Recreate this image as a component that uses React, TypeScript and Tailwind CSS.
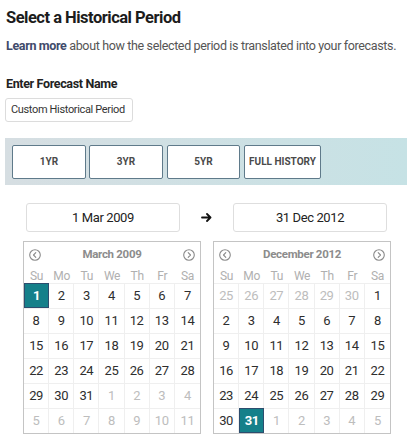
import React from "react";

type Cell = { d: number; cur: boolean; sel?: boolean };

function buildMonth(prevDays: number[], count: number, selected: number): Cell[][] {
  const cells: Cell[] = [];
  prevDays.forEach((d) => cells.push({ d, cur: false }));
  for (let i = 1; i <= count; i++) cells.push({ d: i, cur: true, sel: i === selected });
  let n = 1;
  while (cells.length < 42) cells.push({ d: n++, cur: false });
  const rows: Cell[][] = [];
  for (let r = 0; r < 6; r++) rows.push(cells.slice(r * 7, r * 7 + 7));
  return rows;
}

const DOW = ["Su", "Mo", "Tu", "We", "Th", "Fr", "Sa"];

function NavIcon({ dir }: { dir: "l" | "r" }) {
  return (
    <svg width="12" height="12" viewBox="0 0 12 12" fill="none" stroke="#8a8a8a" strokeWidth="1.1">
      <circle cx="6" cy="6" r="5.3" />
      {dir === "l" ? (
        <path d="M6.8 3.6 4.5 6l2.3 2.4" strokeLinecap="round" strokeLinejoin="round" />
      ) : (
        <path d="M5.2 3.6 7.5 6 5.2 8.4" strokeLinecap="round" strokeLinejoin="round" />
      )}
    </svg>
  );
}

function Calendar({ title, rows }: { title: string; rows: Cell[][] }) {
  return (
    <div className="w-[178px] border border-[#c4c4c4] bg-white">
      <div className="h-[25px] flex items-center justify-between px-[5px]">
        <NavIcon dir="l" />
        <span className="text-[11.5px] font-bold text-[#8c8c8c] tracking-[-0.3px]">{title}</span>
        <NavIcon dir="r" />
      </div>
      <div className="grid grid-cols-7 h-[16px]">
        {DOW.map((d) => (
          <div key={d} className="flex items-center justify-center text-[12px] tracking-[-0.3px] text-[#b0b0b0]">
            {d}
          </div>
        ))}
      </div>
      {rows.map((row, ri) => (
        <div key={ri} className="grid grid-cols-7 h-[25px]">
          {row.map((c, ci) => (
            <div
              key={ci}
              className={
                c.sel
                  ? "flex items-center justify-center text-[13px] tracking-[-0.4px] font-bold text-white bg-[#15808a] border-[1.5px] border-[#2d4d6e]"
                  : `flex items-center justify-center text-[13px] tracking-[-0.4px] border-t border-[#efefef] ${
                      ci < 6 ? "border-r" : ""
                    } ${c.cur ? "text-[#2e2e2e]" : "text-[#bdbdbd]"}`
              }
            >
              {c.d}
            </div>
          ))}
        </div>
      ))}
    </div>
  );
}

export default function App() {
  const mar = buildMonth([], 31, 1);
  const dec = buildMonth([25, 26, 27, 28, 29, 30], 31, 31);
  return (
    <div
      className="w-[407px] h-[442px] overflow-hidden bg-white text-[#333]"
      style={{ fontFamily: "Roboto, 'Liberation Sans', sans-serif" }}
    >
      <h1 className="mt-[6px] ml-[6px] text-[16.5px] leading-[24px] font-bold tracking-[-0.5px] text-[#1c1c1c] whitespace-nowrap">
        Select a Historical Period
      </h1>
      <p className="mt-[7px] ml-[6px] text-[12.5px] leading-[18px] tracking-[-0.35px] text-[#555] whitespace-nowrap">
        <span className="font-bold text-[#3f4b6b]">Learn more</span> about how the selected period is translated into your forecasts.
      </p>
      <div className="mt-[20px] ml-[6px] text-[12.5px] leading-[18px] tracking-[-0.35px] font-bold text-[#222]">
        Enter Forecast Name
      </div>
      <div className="mt-[5px] ml-[5px] w-[128px] h-[24px] border border-[#dcdcdc] rounded-[3px] flex items-center pl-[5px] text-[11px] tracking-[-0.35px] text-[#333] whitespace-nowrap">
        Custom Historical Period
      </div>
      <div className="mt-[16px] ml-[5px] h-[47px] bg-gradient-to-r from-[#d6dee2] to-[#c6e2e5] flex items-center pl-[7px]">
        {[
          ["1YR", "w-[74px]", ""],
          ["3YR", "w-[74px]", "ml-[3px]"],
          ["5YR", "w-[73px]", "ml-[4px]"],
          ["FULL HISTORY", "w-[77px]", "ml-[4px]"],
        ].map(([t, w, m]) => (
          <div
            key={t}
            className={`${w} ${m} h-[34px] bg-white border border-[#5f7a8a] rounded-[2px] flex items-center justify-center text-[10px] font-bold text-[#4a4a4a] whitespace-nowrap`}
          >
            {t}
          </div>
        ))}
      </div>
      <div className="mt-[18px] flex items-center pl-[26px]">
        <div className="w-[154px] h-[29px] border border-[#dedede] rounded-[3px] flex items-center justify-center text-[13px] tracking-[-0.4px] text-[#222]">
          1 Mar 2009
        </div>
        <div className="w-[53px] flex justify-center">
          <svg width="11" height="9" viewBox="0 0 11 9" fill="none" stroke="#111" strokeWidth="1.8" strokeLinecap="round" strokeLinejoin="round">
            <path d="M1 4.5h8.5M6 1l3.5 3.5L6 8" />
          </svg>
        </div>
        <div className="w-[154px] h-[29px] border border-[#dedede] rounded-[3px] flex items-center justify-center text-[13px] tracking-[-0.4px] text-[#222]">
          31 Dec 2012
        </div>
      </div>
      <div className="mt-[9px] flex pl-[23px] gap-[12px]">
        <Calendar title="March 2009" rows={mar} />
        <Calendar title="December 2012" rows={dec} />
      </div>
    </div>
  );
}
